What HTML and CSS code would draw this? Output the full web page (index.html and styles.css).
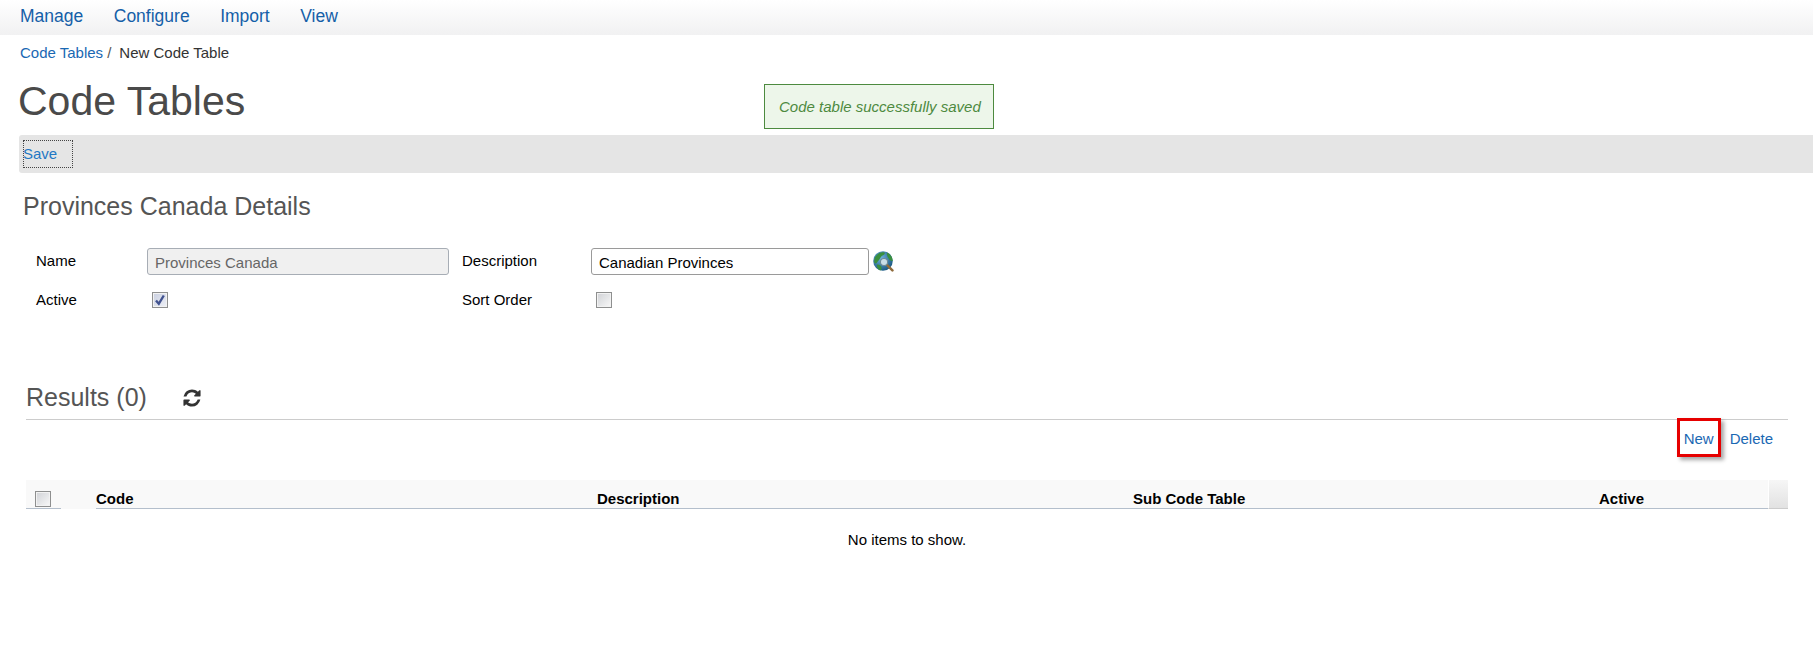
FILE: index.html
```html
<!DOCTYPE html>
<html lang="en">
<head>
<meta charset="utf-8">
<title>Code Tables</title>
<link rel="stylesheet" href="styles.css">
</head>
<body>
<nav class="topnav">
  <a href="#">Manage</a>
  <a href="#">Configure</a>
  <a href="#">Import</a>
  <a href="#">View</a>
</nav>
<div class="crumbs"><a href="#">Code Tables</a><span class="sep">/</span><span>New Code Table</span></div>
<header class="title-row">
  <h1>Code Tables</h1>
  <div class="message">Code table successfully saved</div>
</header>
<div class="toolbar"><a class="save" href="#">Save</a></div>
<h2 class="details-title">Provinces Canada Details</h2>
<form class="form-grid">
  <label>Name</label>
  <div><input class="text disabled" type="text" value="Provinces Canada" disabled></div>
  <label>Description</label>
  <div class="field-with-icon">
    <input class="text" type="text" value="Canadian Provinces">
    <svg class="globe" viewBox="0 0 20 20" width="21" height="21" aria-hidden="true">
      <defs>
        <radialGradient id="sea" cx="40%" cy="35%" r="70%"><stop offset="0" stop-color="#6fb2e0"/><stop offset="1" stop-color="#17557f"/></radialGradient>
      </defs>
      <circle cx="9.500" cy="9.500" r="9.300" fill="url(#sea)"/>
      <path d="M3 4.500C5 1.800 9 .8 11 1.500c1 1.200-1 2.500-2.500 3C7 6 6.500 8 4.500 10 3.500 11.500 2.500 13 1.200 11 .9 8 1.600 6 3 4.500zM13.500 1.500c3 1.500 5.200 4.500 5.300 8-1.500.5-3-.5-3.800-2-.8-1.500-2.500-4-1.500-6zM3.500 13c2-.5 3.500.5 4.500 2 .5 1.500 0 3-1 3.500-2-.8-3.300-3-3.500-5.500z" fill="#3a8f3e"/>
      <path d="M13.500 13.500l5 5" stroke="#8f6b3c" stroke-width="2.400" stroke-linecap="round"/>
      <circle cx="10.500" cy="10.500" r="3.400" fill="#c9dde6" stroke="#6d8a96" stroke-width="1"/>
    </svg>
  </div>
  <label>Active</label>
  <div><span class="cb checked"><svg viewBox="0 0 14 14" width="14" height="14" aria-hidden="true"><path d="M3 7.500l2.800 3.300L10.800 2.500" fill="none" stroke="#41528f" stroke-width="2.400"/></svg></span></div>
  <label>Sort Order</label>
  <div><span class="cb"></span></div>
</form>
<section class="results">
  <div class="results-head">
    <h2>Results (0)</h2>
    <svg class="refresh" viewBox="0 0 1792 1792" width="20" height="20" aria-hidden="true"><path d="M1639 1056q0 5-1 7-64 268-268 434.500t-478 166.500q-146 0-282.500-55t-243.500-157l-129 129q-19 19-45 19t-45-19-19-45v-448q0-26 19-45t45-19h448q26 0 45 19t19 45-19 45l-137 137q71 66 161 102t187 36q134 0 250-65t186-179q11-17 53-117 8-23 30-23h192q13 0 22.500 9.500t9.500 22.500zm25-800v448q0 26-19 45t-45 19h-448q-26 0-45-19t-19-45 19-45l138-138q-148-137-349-137-134 0-250 65t-186 179q-11 17-53 117-8 23-30 23h-199q-13 0-22.500-9.500t-9.500-22.500v-7q65-268 270-434.500t480-166.500q146 0 284 55.500t245 156.500l130-129q19-19 45-19t45 19 19 45z" fill="#333"/></svg>
  </div>
  <div class="actions">
    <a class="new" href="#">New</a>
    <a class="delete" href="#">Delete</a>
  </div>
  <table class="grid">
    <colgroup>
      <col class="c-check"><col class="c-gap"><col class="c-code"><col class="c-desc"><col class="c-sub"><col class="c-active"><col class="c-end">
    </colgroup>
    <thead>
      <tr>
        <th class="lined"><span class="cb"></span></th>
        <th></th>
        <th class="lined">Code</th>
        <th class="lined">Description</th>
        <th class="lined">Sub Code Table</th>
        <th class="lined">Active</th>
        <th class="end"></th>
      </tr>
    </thead>
    <tbody>
      <tr><td colspan="7" class="empty">No items to show.</td></tr>
    </tbody>
  </table>
</section>
</body>
</html>
```

FILE: styles.css
```css
* { box-sizing: border-box; }
html, body { margin: 0; padding: 0; }
body {
  background: #fff;
  color: #000;
  font-family: "Liberation Sans", Arial, sans-serif;
  font-size: 15px;
}
a { color: #1a68b3; text-decoration: none; }

.topnav {
  display: flex;
  align-items: center;
  gap: 30.5px;
  height: 35px;
  padding: 0 0 2px 20px;
  background: linear-gradient(#fff, #f1f1f2);
  font-size: 17.5px;
}
.topnav a { color: #155fa8; }

.crumbs {
  display: flex;
  height: 33px;
  padding: 10px 0 0 20px;
  color: #333;
  line-height: 16px;
  font-size: 15px;
}
.crumbs .sep { margin: 0 8px 0 4px; color: #555; }

.title-row {
  display: flex;
  align-items: flex-start;
  height: 67px;
  padding-left: 18px;
}
.title-row h1 {
  flex: none;
  margin: 10px 0 0;
  width: 227px;
  font-size: 41px;
  font-weight: 400;
  line-height: 46px;
  color: #4a4a4a;
  white-space: nowrap;
}
.message {
  margin: 16px 0 0 519px;
  width: 230px;
  height: 45px;
  padding: 0 14px;
  border: 1px solid #4d8a3f;
  background: #edf6ea;
  color: #4d8a3f;
  font-size: 15px;
  font-style: italic;
  line-height: 43px;
  white-space: nowrap;
}

.toolbar {
  height: 38px;
  margin-left: 19px;
  padding: 5px 0 0 4px;
  background: #e5e5e5;
  border-radius: 3px 0 0 3px;
}
.save {
  display: block;
  width: 50px;
  height: 28px;
  border: 1px dotted #444;
  color: #1f78c4;
  font-size: 15px;
  line-height: 26px;
  text-indent: -1px;
}

.details-title {
  margin: 19px 0 0 23px;
  font-size: 25px;
  font-weight: 400;
  line-height: 28px;
  color: #555;
}

.form-grid {
  display: grid;
  grid-template-columns: 111px 315px 129px 1fr;
  grid-template-rows: 27px 32px;
  row-gap: 12px;
  margin: 28px 0 0 36px;
  line-height: 26px;
}
.form-grid > label { font-size: 15px; color: #000; }
.field-with-icon { display: flex; align-items: center; gap: 4px; }
.globe { flex: none; }

.text {
  display: block;
  height: 27px;
  padding: 2px 7px 0;
  border: 1px solid #9a9a9a;
  border-radius: 3px;
  background: #fff;
  color: #000;
  font: 15px "Liberation Sans", Arial, sans-serif;
  width: 278px;
}
.text.disabled {
  width: 302px;
  border-color: #a7adb5;
  background: #f0f0f0;
  color: #666;
}

.cb {
  display: block;
  width: 16px;
  height: 16px;
  margin: 5px 0 0 5px;
  border: 1px solid #8e8f8f;
  background: linear-gradient(135deg, #d0d2d6, #f8f8f8);
  box-shadow: inset 0 0 0 1px #f2f2f2;
}
.cb.checked { background: linear-gradient(135deg, #c9cfe0, #eef0f6); }
.cb svg { display: block; margin: 0; }

.results { margin: 0 25px 0 26px; }
.results-head {
  display: flex;
  align-items: center;
  gap: 35px;
  height: 40px;
  margin-top: 61px;
  padding-bottom: 5px;
  border-bottom: 1px solid #ccc;
}
.results-head h2 {
  margin: 0;
  font-size: 25px;
  font-weight: 400;
  line-height: 30px;
  color: #555;
}
.refresh { margin-top: 2px; }

.actions {
  display: flex;
  justify-content: flex-end;
  align-items: center;
  height: 39px;
  padding-right: 15px;
  margin-top: -2px;
  font-size: 15px;
}
.actions a { color: #1a68b3; }
.delete { margin-top: 2px; }
.new {
  display: block;
  width: 44px;
  height: 39px;
  margin-right: 9px;
  border: 3px solid #e60000;
  box-shadow: 3px 3px 4px rgba(0, 0, 0, .35);
  line-height: 35px;
  text-align: center;
}

.grid {
  width: 100%;
  margin-top: 23px;
  border-collapse: separate;
  border-spacing: 0;
  table-layout: fixed;
}
.c-check { width: 35px; }
.c-gap { width: 35px; }
.c-code { width: 501px; }
.c-desc { width: 536px; }
.c-sub { width: 466px; }
.c-active { width: 169px; }
.c-end { width: 20px; }
.grid th {
  height: 29px;
  padding: 10px 0 0;
  background: #f9f9f9;
  text-align: left;
  font-size: 15px;
  font-weight: 700;
  line-height: 18px;
  vertical-align: top;
}
.grid th.lined { border-bottom: 1px solid #b4bfcc; }
.grid th .cb { margin: 1px 0 0 9px; }
.grid th.end {
  padding: 0;
  background: linear-gradient(#f6f6f6, #e2e2e2);
  border-bottom: 1px solid #ccc;
  border-left: 1px solid #fff;
}
.empty {
  padding: 22px 0 0;
  text-align: center;
  font-size: 15px;
  line-height: 18px;
}
```
